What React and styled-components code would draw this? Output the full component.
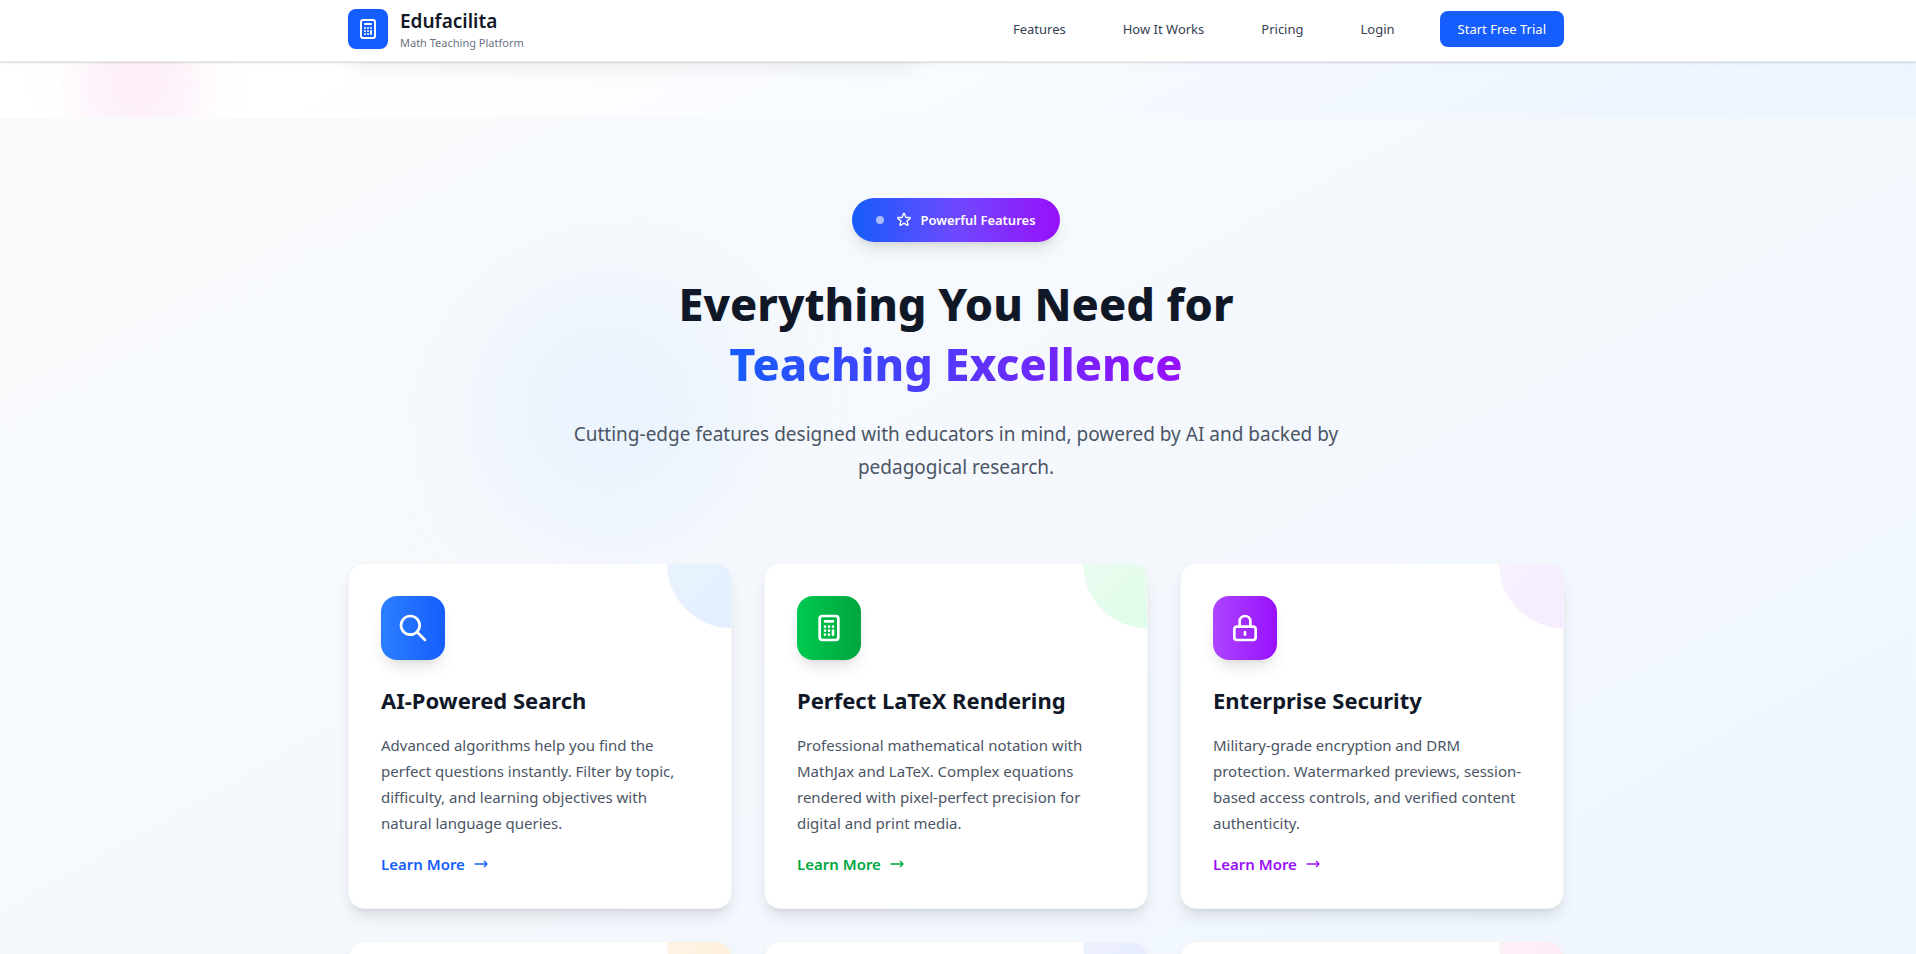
import React from "react";
import styled, { createGlobalStyle } from "styled-components";

const GlobalStyle = createGlobalStyle`
  *, *::before, *::after { box-sizing: border-box; }
  html { scrollbar-width: none; }
  body {
    margin: 0;
    background: #fff;
    color: #101828;
    font-family: "Noto Sans", "Open Sans", sans-serif;
    font-size: 15px;
    line-height: 24px;
  }
  h1, h2, h3, p, ul { margin: 0; padding: 0; }
  a { color: inherit; text-decoration: none; }
  button { font-family: inherit; cursor: pointer; }
`;

const Container = styled.div`
  position: relative;
  max-width: 1284px;
  margin: 0 auto;
  padding: 0 36px 0 32px;
`;

const Header = styled.header`
  position: sticky;
  top: 0;
  z-index: 10;
  background: #fff;
  border-bottom: 1px solid #e5e7eb;
  box-shadow: 0 1px 3px rgba(0, 0, 0, 0.1), 0 1px 2px -1px rgba(0, 0, 0, 0.1);
`;

const HeaderBar = styled.div`
  display: flex;
  align-items: center;
  justify-content: space-between;
  padding: 7px 0 10px;
`;

const Brand = styled.a`
  display: flex;
  align-items: center;
  gap: 12px;
`;

const BrandMark = styled.span`
  display: grid;
  place-items: center;
  width: 40px;
  height: 40px;
  border-radius: 8px;
  background: #155dfc;
  color: #fff;
`;

const BrandText = styled.span`
  display: flex;
  flex-direction: column;
`;

const BrandName = styled.span`
  font-size: 19px;
  font-weight: 600;
  line-height: 28px;
`;

const BrandTagline = styled.span`
  color: #6a7282;
  font-size: 11px;
  line-height: 16px;
`;

const Nav = styled.nav`
  display: flex;
  align-items: center;
  gap: 33px;
`;

const NavLink = styled.a`
  padding: 8px 12px;
  color: #364153;
  font-size: 13px;
  line-height: 20px;
`;

const TrialButton = styled.button`
  padding: 8px 18px;
  border: 0;
  border-radius: 8px;
  background: #155dfc;
  color: #fff;
  font-size: 13px;
  line-height: 20px;
`;

const HeroEnd = styled.section`
  position: relative;
  height: 56px;
  overflow: hidden;
  background: linear-gradient(150deg, #fff 18%, #f8fbff 48%, #eff6ff 82%, #edf5ff 100%);
`;

const HeroGlow = styled.div`
  position: absolute;
  left: 75px;
  top: -40px;
  width: 128px;
  height: 128px;
  border-radius: 50%;
  background: linear-gradient(180deg, #fccee8, #f9d0f2);
  filter: blur(24px);
  opacity: 0.32;
`;

const HeroCardShadow = styled.div`
  width: 576px;
  height: 16px;
  margin-top: -16px;
  border-radius: 16px;
  box-shadow: 0 8px 20px -6px rgba(0, 0, 0, 0.24);
`;

const Features = styled.section`
  position: relative;
  overflow: hidden;
  padding: 80px 0;
  background: linear-gradient(to bottom right, #f9fafb, #f8fafc 12%, #eff6ff 92%);
`;

const FeaturesGlow = styled.div`
  position: absolute;
  left: 25%;
  top: 159px;
  width: 256px;
  height: 256px;
  border-radius: 50%;
  background: #bedbff;
  filter: blur(64px);
  opacity: 0.22;
`;

const Intro = styled.div`
  display: flex;
  flex-direction: column;
  align-items: center;
  margin-bottom: 79px;
  text-align: center;
`;

const Pill = styled.div`
  display: flex;
  align-items: center;
  gap: 12px;
  margin-bottom: 32px;
  padding: 12px 24px;
  border-radius: 22px;
  background: linear-gradient(90deg, #155dfc, #6e49fe 50%, #9810fa);
  box-shadow: 0 10px 15px -3px rgba(0, 0, 0, 0.1), 0 4px 6px -4px rgba(0, 0, 0, 0.1);
  color: #fff;
  font-size: 13px;
  font-weight: 600;
  line-height: 20px;
`;

const PillDot = styled.span`
  width: 8px;
  height: 8px;
  border-radius: 50%;
  background: #fff;
  opacity: 0.6;
`;

const PillLabel = styled.span`
  display: flex;
  align-items: center;
  gap: 8px;
`;

const Title = styled.h1`
  margin-bottom: 24px;
  font-size: 45px;
  font-weight: 800;
  line-height: 60px;
`;

const TitleAccent = styled.span`
  display: block;
  width: fit-content;
  margin: 0 auto;
  background: linear-gradient(90deg, #155dfc, #9810fa);
  background-clip: text;
  -webkit-background-clip: text;
  color: transparent;
`;

const Subtitle = styled.p`
  max-width: 768px;
  color: #4a5565;
  font-size: 19px;
  line-height: 33px;
`;

const CardGrid = styled.ul`
  display: grid;
  grid-template-columns: repeat(3, minmax(0, 1fr));
  gap: 32px;
  list-style: none;
`;

const Card = styled.li`
  position: relative;
  overflow: hidden;
  padding: 32px;
  border: 1px solid #f3f4f6;
  border-radius: 16px;
  background: #fff;
  box-shadow: 0 10px 15px -3px rgba(0, 0, 0, 0.1), 0 4px 6px -4px rgba(0, 0, 0, 0.1);
`;

const CardCorner = styled.div`
  position: absolute;
  top: -64px;
  right: -64px;
  width: 128px;
  height: 128px;
  border-radius: 50%;
  background: linear-gradient(135deg, ${(p) => p.$tint[0]}, ${(p) => p.$tint[1]});
  opacity: 0.5;
`;

const IconTile = styled.div`
  display: grid;
  place-items: center;
  width: 64px;
  height: 64px;
  margin-bottom: 24px;
  border-radius: 16px;
  background: linear-gradient(90deg, ${(p) => p.$fill[0]}, ${(p) => p.$fill[1]});
  box-shadow: 0 10px 15px -3px rgba(0, 0, 0, 0.1), 0 4px 6px -4px rgba(0, 0, 0, 0.1);
  color: #fff;
`;

const CardTitle = styled.h3`
  margin-bottom: 16px;
  font-size: 22px;
  font-weight: 700;
  line-height: 32px;
`;

const CardText = styled.p`
  margin-bottom: 16px;
  color: #4a5565;
  line-height: 26px;
`;

const LearnMore = styled.a`
  display: inline-flex;
  align-items: center;
  gap: 8px;
  color: ${(p) => p.$color};
  font-weight: 600;
  vertical-align: top;
`;

const paths = {
  search: "M21 21l-6-6m2-5a7 7 0 11-14 0 7 7 0 0114 0z",
  calculator:
    "M9 7h6m0 10v-3m-3 3h.01M9 17h.01M9 14h.01M12 14h.01M15 11h.01M12 11h.01M9 11h.01M7 21h10a2 2 0 002-2V5a2 2 0 00-2-2H7a2 2 0 00-2 2v14a2 2 0 002 2z",
  lock: "M12 15v2m-6 4h12a2 2 0 002-2v-6a2 2 0 00-2-2H6a2 2 0 00-2 2v6a2 2 0 002 2zm10-10V7a4 4 0 00-8 0v4h8z",
  star: "M11.049 2.927c.3-.921 1.603-.921 1.902 0l1.519 4.674a1 1 0 00.95.69h4.915c.969 0 1.371 1.24.588 1.81l-3.976 2.888a1 1 0 00-.363 1.118l1.518 4.674c.3.922-.755 1.688-1.538 1.118l-3.976-2.888a1 1 0 00-1.176 0l-3.976 2.888c-.783.57-1.838-.197-1.538-1.118l1.518-4.674a1 1 0 00-.363-1.118l-3.976-2.888c-.784-.57-.38-1.81.588-1.81h4.914a1 1 0 00.951-.69l1.519-4.674z",
  arrow: "M17 8l4 4m0 0l-4 4m4-4H3",
  chart: "M9 19v-6a2 2 0 00-2-2H5a2 2 0 00-2 2v6a2 2 0 002 2h2a2 2 0 002-2zm0 0V9a2 2 0 012-2h2a2 2 0 012 2v10m-6 0a2 2 0 002 2h2a2 2 0 002-2m0 0V5a2 2 0 012-2h2a2 2 0 012 2v14a2 2 0 01-2 2h-2a2 2 0 01-2-2z",
};

function Icon({ name, size }) {
  return (
    <svg
      width={size}
      height={size}
      viewBox="0 0 24 24"
      fill="none"
      stroke="currentColor"
      strokeWidth="2"
      strokeLinecap="round"
      strokeLinejoin="round"
      aria-hidden="true"
    >
      <path d={paths[name]} />
    </svg>
  );
}

const cards = [
  {
    icon: "search",
    title: "AI-Powered Search",
    text: "Advanced algorithms help you find the perfect questions instantly. Filter by topic, difficulty, and learning objectives with natural language queries.",
    fill: ["#2b7fff", "#155dfc"],
    tint: ["#dbeafe", "#bedbff"],
  },
  {
    icon: "calculator",
    title: "Perfect LaTeX Rendering",
    text: "Professional mathematical notation with MathJax and LaTeX. Complex equations rendered with pixel-perfect precision for digital and print media.",
    fill: ["#00c950", "#00a63e"],
    tint: ["#dcfce7", "#b9f8cf"],
  },
  {
    icon: "lock",
    title: "Enterprise Security",
    text: "Military-grade encryption and DRM protection. Watermarked previews, session-based access controls, and verified content authenticity.",
    fill: ["#ad46ff", "#9810fa"],
    tint: ["#f3e8ff", "#e9d4ff"],
  },
  { icon: "chart", fill: ["#ff6900", "#f54900"], tint: ["#ffedd4", "#ffd6a7"] },
  { icon: "star", fill: ["#615fff", "#4f39f6"], tint: ["#e0e7ff", "#c6d2ff"] },
  { icon: "calculator", fill: ["#f6339a", "#e60076"], tint: ["#fce7f3", "#fccee8"] },
];

function FeatureCard({ card }) {
  return (
    <Card>
      <CardCorner $tint={card.tint} />
      <IconTile $fill={card.fill}>
        <Icon name={card.icon} size={32} />
      </IconTile>
      {card.title && (
        <>
          <CardTitle>{card.title}</CardTitle>
          <CardText>{card.text}</CardText>
          <LearnMore href="#features" $color={card.fill[1]}>
            Learn More
            <Icon name="arrow" size={16} />
          </LearnMore>
        </>
      )}
    </Card>
  );
}

export default function App() {
  return (
    <>
      <GlobalStyle />
      <Header>
        <Container>
          <HeaderBar>
            <Brand href="#">
              <BrandMark>
                <Icon name="calculator" size={24} />
              </BrandMark>
              <BrandText>
                <BrandName>Edufacilita</BrandName>
                <BrandTagline>Math Teaching Platform</BrandTagline>
              </BrandText>
            </Brand>
            <Nav>
              <NavLink href="#features">Features</NavLink>
              <NavLink href="#how">How It Works</NavLink>
              <NavLink href="#pricing">Pricing</NavLink>
              <NavLink href="#login">Login</NavLink>
              <TrialButton type="button">Start Free Trial</TrialButton>
            </Nav>
          </HeaderBar>
        </Container>
      </Header>
      <main>
        <HeroEnd>
          <HeroGlow />
          <Container>
            <HeroCardShadow />
          </Container>
        </HeroEnd>
        <Features id="features">
          <FeaturesGlow />
          <Container>
            <Intro>
              <Pill>
                <PillDot />
                <PillLabel>
                  <Icon name="star" size={16} />
                  Powerful Features
                </PillLabel>
              </Pill>
              <Title>
                Everything You Need for
                <TitleAccent>Teaching Excellence</TitleAccent>
              </Title>
              <Subtitle>
                Cutting-edge features designed with educators in mind, powered by AI and backed by
                pedagogical research.
              </Subtitle>
            </Intro>
            <CardGrid>
              {cards.map((card, i) => (
                <FeatureCard key={i} card={card} />
              ))}
            </CardGrid>
          </Container>
        </Features>
      </main>
    </>
  );
}
